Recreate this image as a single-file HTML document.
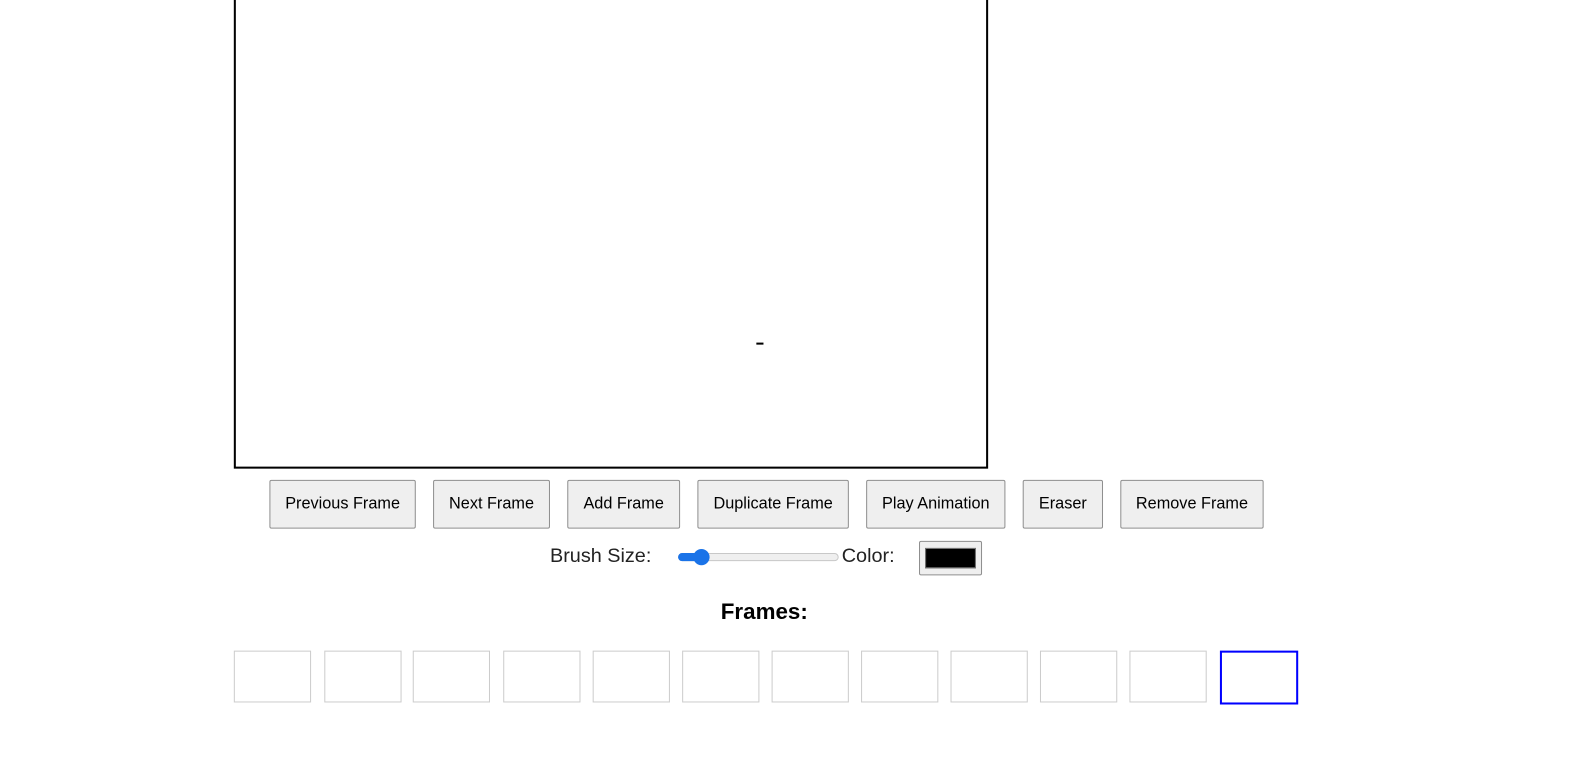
<!DOCTYPE html>
<html><head><style>
body{margin:0;width:1594px;height:760px;background:#fff;position:relative;font-family:"Liberation Sans",Arial,sans-serif;overflow:hidden}
#w{position:absolute;left:0;top:0;width:1568px;height:748px;transform:scale(1.0166);transform-origin:0 0}
.a{position:absolute}
.cv{left:230px;top:-10px;width:738px;height:467px;border:2px solid #000}
.b{position:absolute;top:472px;height:48px;box-sizing:border-box;border:1px solid #8f8f8f;border-radius:2px;background:#efefef;font-size:16px;color:#000;display:flex;align-items:center;justify-content:center;white-space:nowrap}
.t{position:absolute;top:640px;width:76px;height:51px;box-sizing:border-box;border:1px solid #ccc}
</style></head><body><div id="w">
<div class="a cv"></div>
<div class="a" style="left:744px;top:337px;width:7px;height:2px;background:#000"></div>
<div class="b" style="left:265px;width:144px">Previous Frame</div>
<div class="b" style="left:426px;width:115px">Next Frame</div>
<div class="b" style="left:558px;width:111px">Add Frame</div>
<div class="b" style="left:686px;width:149px">Duplicate Frame</div>
<div class="b" style="left:852px;width:137px">Play Animation</div>
<div class="b" style="left:1006px;width:79px">Eraser</div>
<div class="b" style="left:1102px;width:141px">Remove Frame</div>
<div class="a" style="left:541px;top:536px;font-size:19.5px;color:#222">Brush Size:</div>
<div class="a" style="left:667px;top:544px;width:158px;height:8px;box-sizing:border-box;border:1px solid #c8c8c8;border-radius:4px;background:#efefef"></div>
<div class="a" style="left:667px;top:544px;width:22px;height:8px;border-radius:4px;background:#1a73e8"></div>
<div class="a" style="left:682px;top:540px;width:16px;height:16px;border-radius:50%;background:#1a73e8"></div>
<div class="a" style="left:828px;top:536px;font-size:19.5px;color:#222">Color:</div>
<div class="a" style="left:904px;top:532px;width:62px;height:34px;box-sizing:border-box;border:1px solid #8f8f8f;border-radius:2px;background:#efefef"></div>
<div class="a" style="left:910px;top:539px;width:50px;height:20px;background:#000;box-sizing:border-box;border:1px solid #777"></div>
<div class="a" style="left:709px;top:589px;font-size:22px;font-weight:bold">Frames:</div>
<div class="t" style="left:230px"></div>
<div class="t" style="left:319px"></div>
<div class="t" style="left:406px"></div>
<div class="t" style="left:495px"></div>
<div class="t" style="left:583px"></div>
<div class="t" style="left:671px"></div>
<div class="t" style="left:759px"></div>
<div class="t" style="left:847px"></div>
<div class="t" style="left:935px"></div>
<div class="t" style="left:1023px"></div>
<div class="t" style="left:1111px"></div>
<div class="t" style="left:1200px;width:77px;height:53px;border:2px solid #00f"></div>
</div></body></html>
